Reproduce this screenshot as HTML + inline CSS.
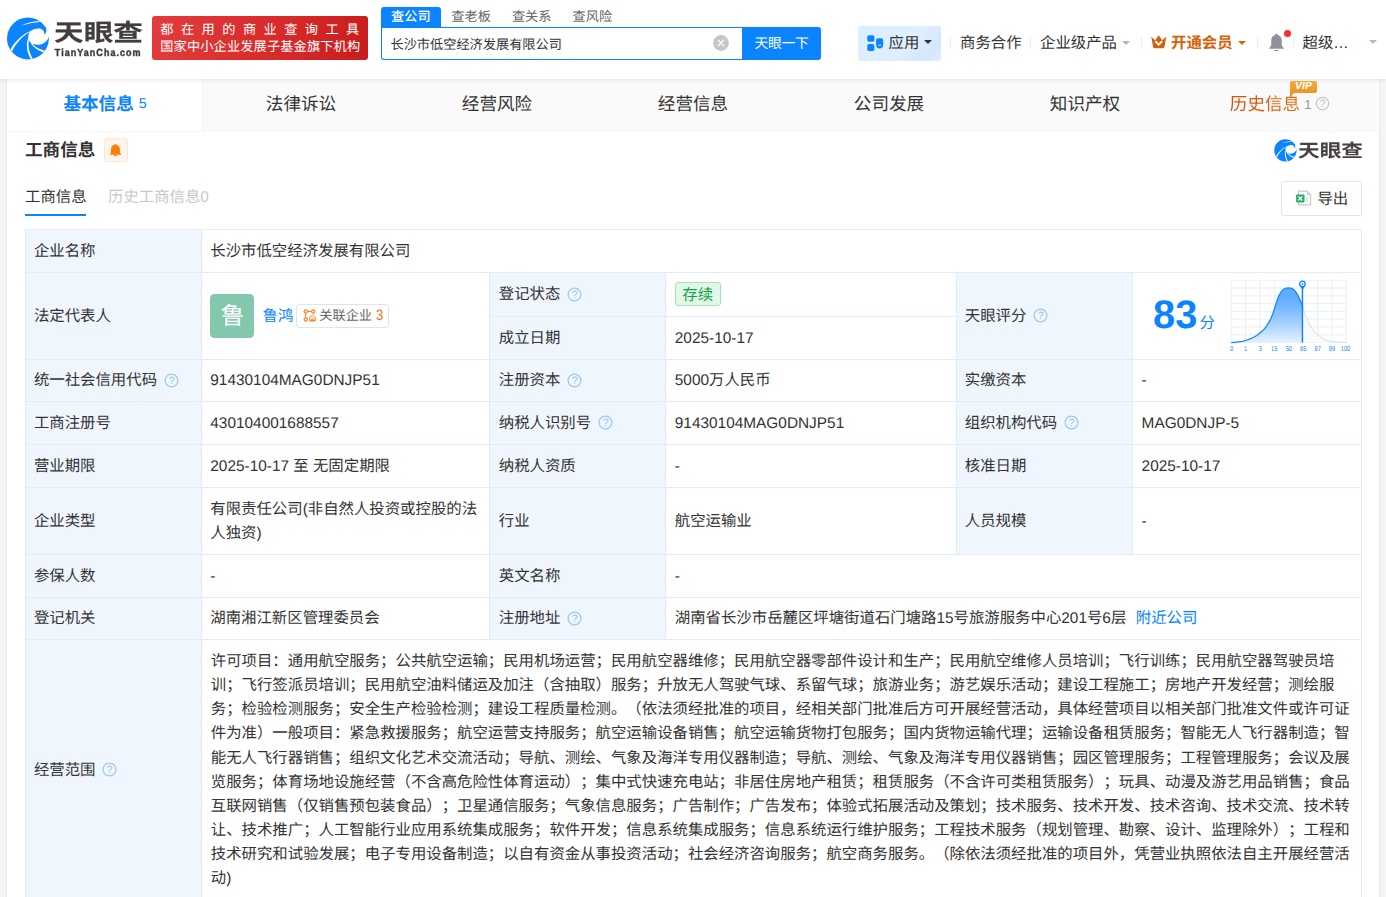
<!DOCTYPE html>
<html lang="zh-CN">
<head>
<meta charset="utf-8">
<title>长沙市低空经济发展有限公司 - 天眼查</title>
<style>
*{box-sizing:border-box;margin:0;padding:0}
html,body{width:1386px;height:897px;overflow:hidden}
body{background:#f5f5f5;font-family:"Liberation Sans","Noto Sans CJK SC",sans-serif;font-size:15.4px;color:#333;position:relative;-webkit-font-smoothing:antialiased;text-spacing-trim:space-all;text-rendering:geometricPrecision}
.abs{position:absolute}
a{color:#0084ff;text-decoration:none}
/* header */
#hd{position:absolute;left:0;top:0;width:1386px;height:79px;background:#fff;box-shadow:0 1px 4px rgba(0,0,0,.10);z-index:5}
#main{position:absolute;left:7px;top:79px;width:1372px;height:830px;background:#fff;box-shadow:0 0 2.5px rgba(0,0,0,.13)}

#lg1{left:53.6px;top:14.4px;font-size:25px;font-weight:bold;-webkit-text-stroke:0.2px #433c3c;color:#433c3c;line-height:40px;white-space:nowrap;transform:scale(1.185,0.95);transform-origin:0 0}
#lg2{left:54.8px;top:47.3px;font-size:9px;font-weight:bold;-webkit-text-stroke:0.4px #433c3c;color:#433c3c;line-height:12px;letter-spacing:1.03px;transform:scale(1,1.15);transform-origin:0 50%;white-space:nowrap;font-family:"Liberation Sans",sans-serif}
#ban{left:152px;top:16px;width:216px;height:44px;border-radius:3px;background:linear-gradient(100deg,#e33c3c 0%,#d82b2b 55%,#c91c1c 100%);color:#fff;font-size:13.2px;white-space:nowrap}
#ban .b1{position:absolute;left:8.3px;top:4.5px;line-height:18px;letter-spacing:7.46px}
#ban .b2{position:absolute;left:8.3px;top:22px;line-height:18px;letter-spacing:0.14px}
.stab{top:7px;width:60.6px;height:20.5px;line-height:19px;font-size:13.2px;color:#666;text-align:center;white-space:nowrap}
.stab.on{background:#0a84ff;color:#fff;border-radius:3px 3px 0 0;font-weight:500}
#sbox{left:381px;top:27px;width:362px;height:33px;border:1px solid #0a84ff;border-right:none;border-radius:0 0 0 3px;padding-left:8.5px;line-height:34px;font-size:13.2px;color:#333;white-space:nowrap;background:#fff}
#sbtn{left:742px;top:27px;width:79px;height:33px;background:#0a84ff;color:#fff;border-radius:0 3px 3px 0;text-align:center;line-height:34px;font-size:13.8px;font-weight:400;white-space:nowrap;letter-spacing:-0.3px}
#app{left:858px;top:26px;width:83px;height:35px;border-radius:3px;background:linear-gradient(135deg,#dcedfe 0%,#dfefff 58%,#d6e6fb 84%,#e2effe 100%);white-space:nowrap}
.caret{width:0;height:0;border:4px solid transparent;border-top-width:4.4px;border-bottom-width:0;margin-left:-0.4px}
.sep{top:36.5px;width:1px;height:12.5px;background:#eceef2}
.nav{top:32px;line-height:24px;white-space:nowrap;color:#333}
/* tabs */
#tabs{position:absolute;left:7px;top:79px;width:1371px;height:53px;background:#fafafa;z-index:2;border-bottom:1px solid #f6f6f6}
.tab{position:absolute;top:0;height:52px;width:196px;text-align:center;line-height:50px;font-size:17.6px;color:#333;white-space:nowrap}
.tab.on{background:linear-gradient(90deg,#fff 195px,#f3f3f3 195px,#f3f3f3 196px,#fafafa 196px);color:#0a84ff;font-weight:bold}
.tab small{font-size:14.3px;font-weight:normal;position:relative;top:-1.6px}

.tab.his{color:#d4620a}
.tab.his .ht{background:linear-gradient(90deg,#d24d05,#e06f14);-webkit-background-clip:text;background-clip:text;color:transparent}
.tab.his .hn{font-size:13.2px;color:#999;margin-left:4px;position:relative;top:-1.3px}
.vip{position:absolute;left:108px;top:2.3px;width:27px;height:11.7px;background:linear-gradient(180deg,#f3ad3d,#ea9526);border-radius:2px;line-height:11.5px;font-size:10.3px;color:#fff;text-align:center;font-family:"Liberation Sans",sans-serif}
.vip em{font-style:italic;font-weight:bold;letter-spacing:0.2px;position:relative;top:-0.5px}
.vip:after{content:"";position:absolute;left:0;top:10px;border:3px solid transparent;border-left-color:#ea9526;border-top-color:#ea9526;border-width:3px 3px 3px 3px}

#sect{left:25px;top:136px;font-size:17.6px;font-weight:bold;line-height:28px;color:#333;white-space:nowrap}
#bell{left:104px;top:138px;width:24px;height:24px;border:1px solid #ffe6d1;background:#fff5ec;border-radius:2.5px}
#wm{left:1274px;top:138.500px;width:90px;height:24px;white-space:nowrap}
#wm span{position:absolute;left:23.500px;top:-3.200px;font-size:19px;font-weight:bold;color:#474141;line-height:36px;transform:scale(1.14,0.96);transform-origin:0 0}
#st1{left:25px;top:186px;line-height:24px;color:#333;white-space:nowrap}
#st1u{left:25px;top:214px;width:61px;height:2.200px;background:#0a84ff}
#st2{left:108px;top:186px;line-height:24px;color:#c8c8c8;white-space:nowrap}
#exp{left:1281px;top:181px;width:81px;height:35px;border:1px solid #dfe3ea;border-radius:2.5px;white-space:nowrap;color:#333}
.av{position:relative;top:-1px;margin-left:-0.8px;display:inline-block;width:44px;height:44px;border-radius:4.500px;background:#82c8ad;color:#fff;font-size:24px;line-height:45px;text-align:center;text-indent:1.8px;flex:none}
.nm{margin-left:9px;color:#0a84ff;flex:none}
.rel{position:relative;top:-1px;display:inline-block;margin-left:2.5px;height:23.500px;border:1px solid #e0e5ec;border-radius:3px;padding:0 5px 0 6px;font-size:13.200px;line-height:21.500px;color:#666;white-space:nowrap;flex:none}
.rel b{color:#ff6a0f;font-weight:normal;display:inline-block;font-size:15.2px;line-height:20px;transform:scaleX(.86);transform-origin:0 50%;margin-right:-1.2px;margin-left:0.5px;vertical-align:top;position:relative;top:0.8px}
.tag{position:relative;top:-1.5px;display:inline-block;height:23.8px;line-height:25.8px;padding:0 6.5px;border:1px solid #a9e1b9;background:#e1f8e9;border-radius:3px;color:#12a042}
.scope p{white-space:nowrap;line-height:24.11px}
.scope{padding-top:8.100px}

.sc{position:absolute;left:20px;top:20px;white-space:nowrap;color:#0a84ff;line-height:44px}
.sc b{font-size:39.8px;font-weight:bold;font-family:"Liberation Sans",sans-serif}
.sc i{font-style:normal;font-size:15.4px;margin-left:2.2px}
/* table */
.c{position:absolute;border-right:1px solid #e2ecf7;border-bottom:1px solid #e2ecf7;padding:2px 8.8px 0 8.8px;display:flex;align-items:center;line-height:24.2px;background:#fff}
.l{background:#eff6fe}
.q{display:inline-block;margin-left:6.5px;position:relative;top:-1.5px;flex:none;vertical-align:middle}
</style>
</head>
<body>
<div id="hd">
<svg class="abs" style="left:0;top:10px" width="80" height="56" viewBox="0 0 1280 896"><circle cx="447" cy="455" r="335" fill="#0a84ff"/><g fill="#fff"><path d="M478 342C540 305 640 270 695 330C710 350 712 380 710 400C735 370 750 330 740 290L800 290L800 432L780 430C760 500 680 560 600 555C560 552 530 545 500 535L455 470C445 420 460 370 478 342Z"/><path d="M335 252Q480 180 632 176L634 192Q480 204 335 252Z"/><path d="M480 338C370 382 242 492 168 628L190 664C262 516 380 398 480 346Z"/><path d="M446 458C410 560 436 690 494 782L522 774C465 680 444 570 464 468Z"/><path d="M492 532C540 600 610 652 688 676L714 650C640 630 560 590 512 534Z"/></g></svg>
<div class="abs" id="lg1">天眼查</div>
<div class="abs" id="lg2">TianYanCha.com</div>
<div class="abs" id="ban"><div class="b1">都在用的商业查询工具</div><div class="b2">国家中小企业发展子基金旗下机构</div></div>
<div class="abs stab on" style="left:380.5px">查公司</div>
<div class="abs stab" style="left:440.8px">查老板</div>
<div class="abs stab" style="left:501.4px">查关系</div>
<div class="abs stab" style="left:562px">查风险</div>
<div class="abs" id="sbox">长沙市低空经济发展有限公司</div>
<svg class="abs" style="left:713px;top:34.6px" width="16" height="16" viewBox="0 0 16 16"><circle cx="8" cy="8" r="7.9" fill="#c5c6ca"/><path d="M5.3 5.3L10.7 10.7M10.7 5.3L5.3 10.7" stroke="#fff" stroke-width="1.3" stroke-linecap="round"/></svg>
<div class="abs" id="sbtn">天眼一下</div>
<div class="abs" id="app"><svg class="abs" style="left:9px;top:9px" width="17" height="17" viewBox="0 0 17 17"><rect x="0.3" y="0.3" width="7.05" height="6.5" rx="1.7" fill="#0a84ff"/><rect x="0.3" y="9.1" width="7.05" height="6.8" rx="1.7" fill="#0a84ff"/><path d="M9.1 5.2Q9.1 3.2 11.1 3.2H14.2Q16.2 3.2 16.2 5.2V9.6Q16.2 13.6 12.65 13.6Q9.1 13.6 9.1 9.600Z" fill="#0a84ff"/><path d="M10.7 9.7H14.600Q12.650 12.300 10.700 9.700Z" fill="#cfe4fd"/></svg><span class="abs" style="left:30.5px;top:0;line-height:35px">应用</span><i class="abs caret" style="left:66.5px;top:14.2px;border-top-color:#333"></i></div>
<i class="abs sep" style="left:950px"></i>
<div class="abs nav" style="left:960px">商务合作</div>
<i class="abs sep" style="left:1030px"></i>
<div class="abs nav" style="left:1040px">企业级产品</div>
<i class="abs caret" style="left:1122px;top:40.5px;border-top-color:#b8b8b8"></i>
<i class="abs sep" style="left:1141px"></i>
<svg class="abs" style="left:1151px;top:35px" width="15.5" height="13.6" viewBox="0 0 31 27"><path d="M0.5 3.5L8.3 10.2L15.5 0.3L22.7 10.2L30.5 3.5L27 23.5Q26.6 26.6 23.4 26.6H7.6Q4.4 26.6 4 23.5Z" fill="#d4620a"/><path d="M8.6 12.2L15.5 19.3L22.4 12.2" fill="none" stroke="#fff" stroke-width="3.8" stroke-linejoin="miter"/></svg>
<div class="abs nav" style="left:1171px;color:#d4620a;font-weight:bold">开通会员</div>
<i class="abs caret" style="left:1238px;top:40.5px;border-top-color:#d4620a"></i>
<i class="abs sep" style="left:1257px"></i>
<svg class="abs" style="left:1268px;top:33px" width="17" height="19" viewBox="0 0 34 38"><path d="M17 1.5C18.6 1.5 19.6 2.6 19.6 4.2C25 5.6 27.6 10 27.6 16V25L31.6 30.6V31.6H2.4V30.6L6.4 25V16C6.4 10 9 5.6 14.4 4.2C14.4 2.6 15.4 1.5 17 1.5Z" fill="#8e9198"/><rect x="12.4" y="34" width="9.2" height="2.2" rx="1.1" fill="#8e9198"/></svg>
<i class="abs" style="left:1284px;top:30.4px;width:7px;height:7px;border-radius:50%;background:#ff2a2a"></i>
<i class="abs sep" style="left:1293px"></i>
<div class="abs nav" style="left:1302.5px">超级…</div>
<i class="abs caret" style="left:1369.5px;top:39.5px;border-top-color:#b8b8b8"></i>
</div>
<div id="main"></div>

<div class="abs" id="sect">工商信息</div>
<div class="abs" id="bell"><svg class="abs" style="left:5.2px;top:4.9px" width="10.9" height="12.3" viewBox="0 0 21.7 24.5"><path d="M10.8 0C11.6 0 12.2 0.500 12.3 1.400C16.600 2.200 19.700 5.600 19.700 10V17.200L21.700 19.600V21.300H0V19.600L2 17.200V10C2 5.600 5 2.200 9.300 1.400C9.400 0.500 10 0 10.800 0Z" fill="#ff7d05"/><path d="M7.200 21.200H14.500C14.200 23.200 12.800 24.500 10.850 24.500C8.900 24.500 7.500 23.200 7.200 21.200Z" fill="#ff7d05"/></svg></div>
<div class="abs" id="wm"><svg class="abs" style="left:0;top:0" width="23" height="23" viewBox="105 115 690 690"><circle cx="447" cy="455" r="335" fill="#0a84ff"/><g fill="#fff"><path d="M478 342C540 305 640 270 695 330C710 350 712 380 710 400C735 370 750 330 740 290L800 290L800 432L780 430C760 500 680 560 600 555C560 552 530 545 500 535L455 470C445 420 460 370 478 342Z"/><path d="M335 252Q480 180 632 176L634 192Q480 204 335 252Z"/><path d="M480 338C370 382 242 492 168 628L190 664C262 516 380 398 480 346Z"/><path d="M446 458C410 560 436 690 494 782L522 774C465 680 444 570 464 468Z"/><path d="M492 532C540 600 610 652 688 676L714 650C640 630 560 590 512 534Z"/></g></svg><span>天眼查</span></div>
<div class="abs" id="st1">工商信息</div>
<div class="abs" id="st1u"></div>
<div class="abs" id="st2">历史工商信息0</div>
<div class="abs" id="exp"><svg class="abs" style="left:13.5px;top:8px" width="16" height="16" viewBox="0 0 16 16"><path d="M2.500 1.100H11.200L14.600 4.500V14.800H2.500Z" fill="#fff" stroke="#c6cad2" stroke-width="1.200" stroke-linejoin="round"/><path d="M11.200 1.100V4.500H14.600" fill="none" stroke="#c6cad2" stroke-width="1.100"/><path d="M9.800 6.900H12.300M9.800 9.100H12.300M9.800 11.100H12.300" stroke="#c9cdd4" stroke-width="1"/><rect x="0.150" y="4.500" width="8.350" height="7.900" rx="0.800" fill="#21b065"/><path d="M2.400 6.400L6.300 10.500M6.300 6.400L2.400 10.500" stroke="#fff" stroke-width="1.350"/></svg><span class="abs" style="left:35.400px;top:0;line-height:35px">导出</span></div>
<div id="tb">
<div class="abs" style="left:25px;top:229px;width:1337px;height:1px;background:#e2ecf7"></div>
<div class="abs" style="left:25px;top:229px;width:1px;height:668px;background:#e2ecf7"></div>
<div class="c l" style="left:26px;top:230px;width:176px;height:43px;padding-left:7.9px">企业名称</div>
<div class="c " style="left:202px;top:230px;width:1160px;height:43px;padding-left:8.3px">长沙市低空经济发展有限公司</div>
<div class="c l" style="left:26px;top:273px;width:176px;height:87px;padding-left:7.9px">法定代表人</div>
<div class="c " style="left:202px;top:273px;width:288px;height:87px;padding-left:8.3px"><span class="av">鲁</span><a class="nm">鲁鸿</a><span class="rel"><svg width="13" height="13" viewBox="0 0 26 26" style="vertical-align:-2px;margin-right:3.5px"><g fill="none" stroke="#ff7d1a" stroke-width="2.2"><circle cx="5.5" cy="5" r="3.3"/><circle cx="20.5" cy="5" r="3.3"/><circle cx="5.5" cy="21" r="3.3"/><path d="M8.8 5H17.2M5.5 8.3V17.7"/><path d="M13.5 23.5V16.5L19 12.5L24.5 16.5V23.5ZM13.5 23.5H24.5M17.5 23V19.5H20.5V23" stroke-width="2"/></g></svg>关联企业 <b>3</b></span></div>
<div class="c l" style="left:490px;top:273px;width:176px;height:44px">登记状态<svg class="q" width="15" height="15" viewBox="0 0 15 15"><circle cx="7.5" cy="7.5" r="6.4" fill="none" stroke="#9fc9ef" stroke-width="1.25"/><text x="7.6" y="11.3" text-anchor="middle" font-size="10.6" fill="#93c1ec" font-family="Liberation Sans, sans-serif">?</text></svg></div>
<div class="c " style="left:666px;top:273px;width:291px;height:44px"><span class="tag">存续</span></div>
<div class="c l" style="left:490px;top:317px;width:176px;height:43px">成立日期</div>
<div class="c " style="left:666px;top:317px;width:291px;height:43px">2025-10-17</div>
<div class="c l" style="left:957px;top:273px;width:176px;height:87px;padding-left:7.8px">天眼评分<svg class="q" width="15" height="15" viewBox="0 0 15 15"><circle cx="7.5" cy="7.5" r="6.4" fill="none" stroke="#9fc9ef" stroke-width="1.25"/><text x="7.6" y="11.3" text-anchor="middle" font-size="10.6" fill="#93c1ec" font-family="Liberation Sans, sans-serif">?</text></svg></div>
<div class="c " style="left:1133px;top:273px;width:229px;height:87px;padding-left:8.6px"><span class="sc"><b>83</b><i>分</i></span><svg class="abs" style="left:92px;top:3px" width="135" height="80" viewBox="0 0 135 80"><defs><linearGradient id="cg" x1="0" y1="0" x2="0" y2="1"><stop offset="0.15" stop-color="#55a8ff"/><stop offset="0.5" stop-color="#86c0ff"/><stop offset="1" stop-color="#e3f0fe"/></linearGradient></defs><path d="M6.16 4.22V66.59M20.54 4.22V66.59M34.93 4.22V66.59M49.32 4.22V66.59M63.70 4.22V66.59M78.09 4.22V66.59M92.47 4.22V66.59M106.86 4.22V66.59M121.25 4.22V66.59M6.16 4.22H121.25M6.16 12.02H121.25M6.16 19.81H121.25M6.16 27.61H121.25M6.16 35.41H121.25M6.16 43.20H121.25M6.16 51.00H121.25M6.16 58.80H121.25M6.16 66.59H121.25" stroke="#e8f1fb" stroke-width="1" fill="none"/><path d="M77.44 30.01L77.44 30.01L77.77 31.06L78.14 32.27L78.53 33.59L78.94 34.95L79.36 36.28L79.79 37.52L80.23 38.68L80.69 39.81L81.17 40.92L81.65 42.00L82.13 43.05L82.60 44.08L83.05 45.07L83.47 45.99L83.89 46.90L84.34 47.80L84.84 48.73L85.42 49.71L86.09 50.78L86.84 51.92L87.64 53.08L88.47 54.23L89.30 55.31L90.11 56.28L90.88 57.13L91.63 57.89L92.39 58.59L93.16 59.25L93.96 59.88L94.80 60.50L95.65 61.12L96.50 61.71L97.37 62.29L98.30 62.83L99.31 63.33L100.42 63.78L101.62 64.19L102.87 64.54L104.20 64.87L105.63 65.15L107.18 65.41L108.86 65.66L110.88 65.88L113.24 66.07L115.72 66.24L118.09 66.39L120.10 66.50L121.53 66.59L121.25 66.59L77.44 66.59Z" fill="#f8f9fa" fill-opacity="0.85"/><path d="M77.44 30.01L77.44 30.01L77.77 31.06L78.14 32.27L78.53 33.59L78.94 34.95L79.36 36.28L79.79 37.52L80.23 38.68L80.69 39.81L81.17 40.92L81.65 42.00L82.13 43.05L82.60 44.08L83.05 45.07L83.47 45.99L83.89 46.90L84.34 47.80L84.84 48.73L85.42 49.71L86.09 50.78L86.84 51.92L87.64 53.08L88.47 54.23L89.30 55.31L90.11 56.28L90.88 57.13L91.63 57.89L92.39 58.59L93.16 59.25L93.96 59.88L94.80 60.50L95.65 61.12L96.50 61.71L97.37 62.29L98.30 62.83L99.31 63.33L100.42 63.78L101.62 64.19L102.87 64.54L104.20 64.87L105.63 65.15L107.18 65.41L108.86 65.66L110.88 65.88L113.24 66.07L115.72 66.24L118.09 66.39L120.10 66.50L121.53 66.59" stroke="#cfd7e0" stroke-width="0.9" fill="none"/><path d="M6.16 66.59L6.93 66.53L8.00 66.45L9.27 66.34L10.62 66.22L11.97 66.09L13.19 65.94L14.28 65.80L15.31 65.67L16.33 65.52L17.38 65.33L18.51 65.07L19.76 64.72L21.19 64.25L22.78 63.69L24.45 63.06L26.12 62.38L27.71 61.68L29.14 60.97L30.42 60.24L31.60 59.47L32.71 58.68L33.76 57.88L34.75 57.07L35.70 56.28L36.59 55.53L37.41 54.82L38.17 54.11L38.90 53.36L39.63 52.53L40.39 51.59L41.20 50.49L42.03 49.26L42.86 47.95L43.66 46.62L44.41 45.31L45.08 44.08L45.67 42.92L46.20 41.79L46.67 40.68L47.10 39.60L47.50 38.55L47.90 37.52L48.26 36.55L48.57 35.64L48.86 34.76L49.15 33.87L49.44 32.93L49.77 31.89L50.14 30.73L50.52 29.46L50.92 28.14L51.32 26.82L51.72 25.55L52.12 24.39L52.50 23.32L52.88 22.32L53.26 21.37L53.65 20.46L54.05 19.59L54.46 18.76L54.90 17.95L55.35 17.17L55.81 16.43L56.29 15.73L56.78 15.10L57.28 14.54L57.80 14.05L58.34 13.63L58.89 13.27L59.45 12.96L60.01 12.70L60.56 12.47L61.11 12.29L61.65 12.16L62.20 12.07L62.75 12.02L63.30 12.00L63.84 12.01L64.39 12.03L64.94 12.06L65.48 12.13L66.03 12.24L66.58 12.42L67.13 12.66L67.68 12.98L68.24 13.37L68.80 13.82L69.35 14.32L69.89 14.87L70.41 15.48L70.90 16.13L71.38 16.85L71.84 17.62L72.30 18.43L72.76 19.28L73.22 20.17L73.71 21.13L74.21 22.18L74.72 23.27L75.20 24.35L75.65 25.37L76.04 26.26L76.34 26.98L76.57 27.55L76.77 28.05L76.96 28.57L77.17 29.20L77.44 30.01L77.44 30.01L77.44 66.59L6.16 66.59Z" fill="url(#cg)" fill-opacity="0.95"/><path d="M6.16 66.59L6.93 66.53L8.00 66.45L9.27 66.34L10.62 66.22L11.97 66.09L13.19 65.94L14.28 65.80L15.31 65.67L16.33 65.52L17.38 65.33L18.51 65.07L19.76 64.72L21.19 64.25L22.78 63.69L24.45 63.06L26.12 62.38L27.71 61.68L29.14 60.97L30.42 60.24L31.60 59.47L32.71 58.68L33.76 57.88L34.75 57.07L35.70 56.28L36.59 55.53L37.41 54.82L38.17 54.11L38.90 53.36L39.63 52.53L40.39 51.59L41.20 50.49L42.03 49.26L42.86 47.95L43.66 46.62L44.41 45.31L45.08 44.08L45.67 42.92L46.20 41.79L46.67 40.68L47.10 39.60L47.50 38.55L47.90 37.52L48.26 36.55L48.57 35.64L48.86 34.76L49.15 33.87L49.44 32.93L49.77 31.89L50.14 30.73L50.52 29.46L50.92 28.14L51.32 26.82L51.72 25.55L52.12 24.39L52.50 23.32L52.88 22.32L53.26 21.37L53.65 20.46L54.05 19.59L54.46 18.76L54.90 17.95L55.35 17.17L55.81 16.43L56.29 15.73L56.78 15.10L57.28 14.54L57.80 14.05L58.34 13.63L58.89 13.27L59.45 12.96L60.01 12.70L60.56 12.47L61.11 12.29L61.65 12.16L62.20 12.07L62.75 12.02L63.30 12.00L63.84 12.01L64.39 12.03L64.94 12.06L65.48 12.13L66.03 12.24L66.58 12.42L67.13 12.66L67.68 12.98L68.24 13.37L68.80 13.82L69.35 14.32L69.89 14.87L70.41 15.48L70.90 16.13L71.38 16.85L71.84 17.62L72.30 18.43L72.76 19.28L73.22 20.17L73.71 21.13L74.21 22.18L74.72 23.27L75.20 24.35L75.65 25.37L76.04 26.26L76.34 26.98L76.57 27.55L76.77 28.05L76.96 28.57L77.17 29.20L77.44 30.01L77.44 30.01" stroke="#1588ff" stroke-width="1.3" fill="none" stroke-linejoin="round"/><path d="M77.44 10.97V66.59" stroke="#0a84ff" stroke-width="1.4"/><path d="M75.24 9.97L77.44 14.17L79.64 9.97Z" fill="#0a84ff"/><circle cx="77.44" cy="7.97" r="2.75" fill="#fff" stroke="#0a84ff" stroke-width="1.25"/><circle cx="77.44" cy="7.97" r="0.9" fill="#0a84ff"/><g font-family="Liberation Sans, sans-serif" font-size="7" fill="#0a84ff" transform="scale(0.8,1)"><text x="8.05" y="75.0" text-anchor="middle">0</text><text x="25.64" y="75.0" text-anchor="middle">1</text><text x="44.28" y="75.0" text-anchor="middle">3</text><text x="61.51" y="75.0" text-anchor="middle">15</text><text x="79.80" y="75.0" text-anchor="middle">50</text><text x="97.74" y="75.0" text-anchor="middle">85</text><text x="115.91" y="75.0" text-anchor="middle">97</text><text x="133.74" y="75.0" text-anchor="middle">99</text><text x="150.62" y="75.0" text-anchor="middle">100</text></g></svg></div>
<div class="c l" style="left:26px;top:360px;width:176px;height:42px;padding-left:7.9px">统一社会信用代码<svg class="q" width="15" height="15" viewBox="0 0 15 15"><circle cx="7.5" cy="7.5" r="6.4" fill="none" stroke="#9fc9ef" stroke-width="1.25"/><text x="7.6" y="11.3" text-anchor="middle" font-size="10.6" fill="#93c1ec" font-family="Liberation Sans, sans-serif">?</text></svg></div>
<div class="c " style="left:202px;top:360px;width:288px;height:42px;padding-left:8.3px">91430104MAG0DNJP51</div>
<div class="c l" style="left:490px;top:360px;width:176px;height:42px">注册资本<svg class="q" width="15" height="15" viewBox="0 0 15 15"><circle cx="7.5" cy="7.5" r="6.4" fill="none" stroke="#9fc9ef" stroke-width="1.25"/><text x="7.6" y="11.3" text-anchor="middle" font-size="10.6" fill="#93c1ec" font-family="Liberation Sans, sans-serif">?</text></svg></div>
<div class="c " style="left:666px;top:360px;width:291px;height:42px">5000万人民币</div>
<div class="c l" style="left:957px;top:360px;width:176px;height:42px;padding-left:7.8px">实缴资本</div>
<div class="c " style="left:1133px;top:360px;width:229px;height:42px;padding-left:8.6px">-</div>
<div class="c l" style="left:26px;top:402px;width:176px;height:43px;padding-left:7.9px">工商注册号</div>
<div class="c " style="left:202px;top:402px;width:288px;height:43px;padding-left:8.3px">430104001688557</div>
<div class="c l" style="left:490px;top:402px;width:176px;height:43px">纳税人识别号<svg class="q" width="15" height="15" viewBox="0 0 15 15"><circle cx="7.5" cy="7.5" r="6.4" fill="none" stroke="#9fc9ef" stroke-width="1.25"/><text x="7.6" y="11.3" text-anchor="middle" font-size="10.6" fill="#93c1ec" font-family="Liberation Sans, sans-serif">?</text></svg></div>
<div class="c " style="left:666px;top:402px;width:291px;height:43px">91430104MAG0DNJP51</div>
<div class="c l" style="left:957px;top:402px;width:176px;height:43px;padding-left:7.8px">组织机构代码<svg class="q" width="15" height="15" viewBox="0 0 15 15"><circle cx="7.5" cy="7.5" r="6.4" fill="none" stroke="#9fc9ef" stroke-width="1.25"/><text x="7.6" y="11.3" text-anchor="middle" font-size="10.6" fill="#93c1ec" font-family="Liberation Sans, sans-serif">?</text></svg></div>
<div class="c " style="left:1133px;top:402px;width:229px;height:43px;padding-left:8.6px">MAG0DNJP-5</div>
<div class="c l" style="left:26px;top:445px;width:176px;height:43px;padding-left:7.9px">营业期限</div>
<div class="c " style="left:202px;top:445px;width:288px;height:43px;padding-left:8.3px">2025-10-17 至 无固定期限</div>
<div class="c l" style="left:490px;top:445px;width:176px;height:43px">纳税人资质</div>
<div class="c " style="left:666px;top:445px;width:291px;height:43px">-</div>
<div class="c l" style="left:957px;top:445px;width:176px;height:43px;padding-left:7.8px">核准日期</div>
<div class="c " style="left:1133px;top:445px;width:229px;height:43px;padding-left:8.6px">2025-10-17</div>
<div class="c l" style="left:26px;top:488px;width:176px;height:67px;padding-left:7.9px">企业类型</div>
<div class="c " style="left:202px;top:488px;width:288px;height:67px;padding-left:8.3px"><span>有限责任公司(非自然人投资或控股的法<br>人独资)</span></div>
<div class="c l" style="left:490px;top:488px;width:176px;height:67px">行业</div>
<div class="c " style="left:666px;top:488px;width:291px;height:67px">航空运输业</div>
<div class="c l" style="left:957px;top:488px;width:176px;height:67px;padding-left:7.8px">人员规模</div>
<div class="c " style="left:1133px;top:488px;width:229px;height:67px;padding-left:8.6px">-</div>
<div class="c l" style="left:26px;top:555px;width:176px;height:43px;padding-left:7.9px">参保人数</div>
<div class="c " style="left:202px;top:555px;width:288px;height:43px;padding-left:8.3px">-</div>
<div class="c l" style="left:490px;top:555px;width:176px;height:43px">英文名称</div>
<div class="c " style="left:666px;top:555px;width:696px;height:43px">-</div>
<div class="c l" style="left:26px;top:598px;width:176px;height:42px;padding-left:7.9px">登记机关</div>
<div class="c " style="left:202px;top:598px;width:288px;height:42px;padding-left:8.3px">湖南湘江新区管理委员会</div>
<div class="c l" style="left:490px;top:598px;width:176px;height:42px">注册地址<svg class="q" width="15" height="15" viewBox="0 0 15 15"><circle cx="7.5" cy="7.5" r="6.4" fill="none" stroke="#9fc9ef" stroke-width="1.25"/><text x="7.6" y="11.3" text-anchor="middle" font-size="10.6" fill="#93c1ec" font-family="Liberation Sans, sans-serif">?</text></svg></div>
<div class="c " style="left:666px;top:598px;width:696px;height:42px">湖南省长沙市岳麓区坪塘街道石门塘路15号旅游服务中心201号6层<a style="margin-left:9.5px">附近公司</a></div>
<div class="c l" style="left:26px;top:640px;width:176px;height:261px;padding-left:7.9px">经营范围<svg class="q" width="15" height="15" viewBox="0 0 15 15"><circle cx="7.5" cy="7.5" r="6.4" fill="none" stroke="#9fc9ef" stroke-width="1.25"/><text x="7.6" y="11.3" text-anchor="middle" font-size="10.6" fill="#93c1ec" font-family="Liberation Sans, sans-serif">?</text></svg></div>
<div class="c " style="left:202px;top:640px;width:1160px;height:261px;align-items:flex-start;padding-left:8.8px"><div class="scope"><p>许可项目：通用航空服务；公共航空运输；民用机场运营；民用航空器维修；民用航空器零部件设计和生产；民用航空维修人员培训；飞行训练；民用航空器驾驶员培</p><p>训；飞行签派员培训；民用航空油料储运及加注（含抽取）服务；升放无人驾驶气球、系留气球；旅游业务；游艺娱乐活动；建设工程施工；房地产开发经营；测绘服</p><p>务；检验检测服务；安全生产检验检测；建设工程质量检测。（依法须经批准的项目，经相关部门批准后方可开展经营活动，具体经营项目以相关部门批准文件或许可证</p><p>件为准）一般项目：紧急救援服务；航空运营支持服务；航空运输设备销售；航空运输货物打包服务；国内货物运输代理；运输设备租赁服务；智能无人飞行器制造；智</p><p>能无人飞行器销售；组织文化艺术交流活动；导航、测绘、气象及海洋专用仪器制造；导航、测绘、气象及海洋专用仪器销售；园区管理服务；工程管理服务；会议及展</p><p>览服务；体育场地设施经营（不含高危险性体育运动）；集中式快速充电站；非居住房地产租赁；租赁服务（不含许可类租赁服务）；玩具、动漫及游艺用品销售；食品</p><p>互联网销售（仅销售预包装食品）；卫星通信服务；气象信息服务；广告制作；广告发布；体验式拓展活动及策划；技术服务、技术开发、技术咨询、技术交流、技术转</p><p>让、技术推广；人工智能行业应用系统集成服务；软件开发；信息系统集成服务；信息系统运行维护服务；工程技术服务（规划管理、勘察、设计、监理除外）；工程和</p><p>技术研究和试验发展；电子专用设备制造；以自有资金从事投资活动；社会经济咨询服务；航空商务服务。（除依法须经批准的项目外，凭营业执照依法自主开展经营活</p><p>动)</p></div></div>
</div>
<div id="tabs">
<div class="tab on" style="left:0">基本信息 <small>5</small></div>
<div class="tab" style="left:196px">法律诉讼</div>
<div class="tab" style="left:392px">经营风险</div>
<div class="tab" style="left:588px">经营信息</div>
<div class="tab" style="left:784px">公司发展</div>
<div class="tab" style="left:980px">知识产权</div>
<div class="tab his" style="left:1175px"><span class="ht">历史信息</span><span class="hn">1</span><svg class="q" style="margin-left:3.6px;top:-1.5px" width="15" height="15" viewBox="0 0 15 15"><circle cx="7.5" cy="7.5" r="6.2" fill="none" stroke="#c4c4c4" stroke-width="1.2"/><text x="7.6" y="11.3" text-anchor="middle" font-size="10.6" fill="#bdbdbd" font-family="Liberation Sans, sans-serif">?</text></svg><b class="vip"><em>VIP</em></b></div>
</div>
</body>
</html>
